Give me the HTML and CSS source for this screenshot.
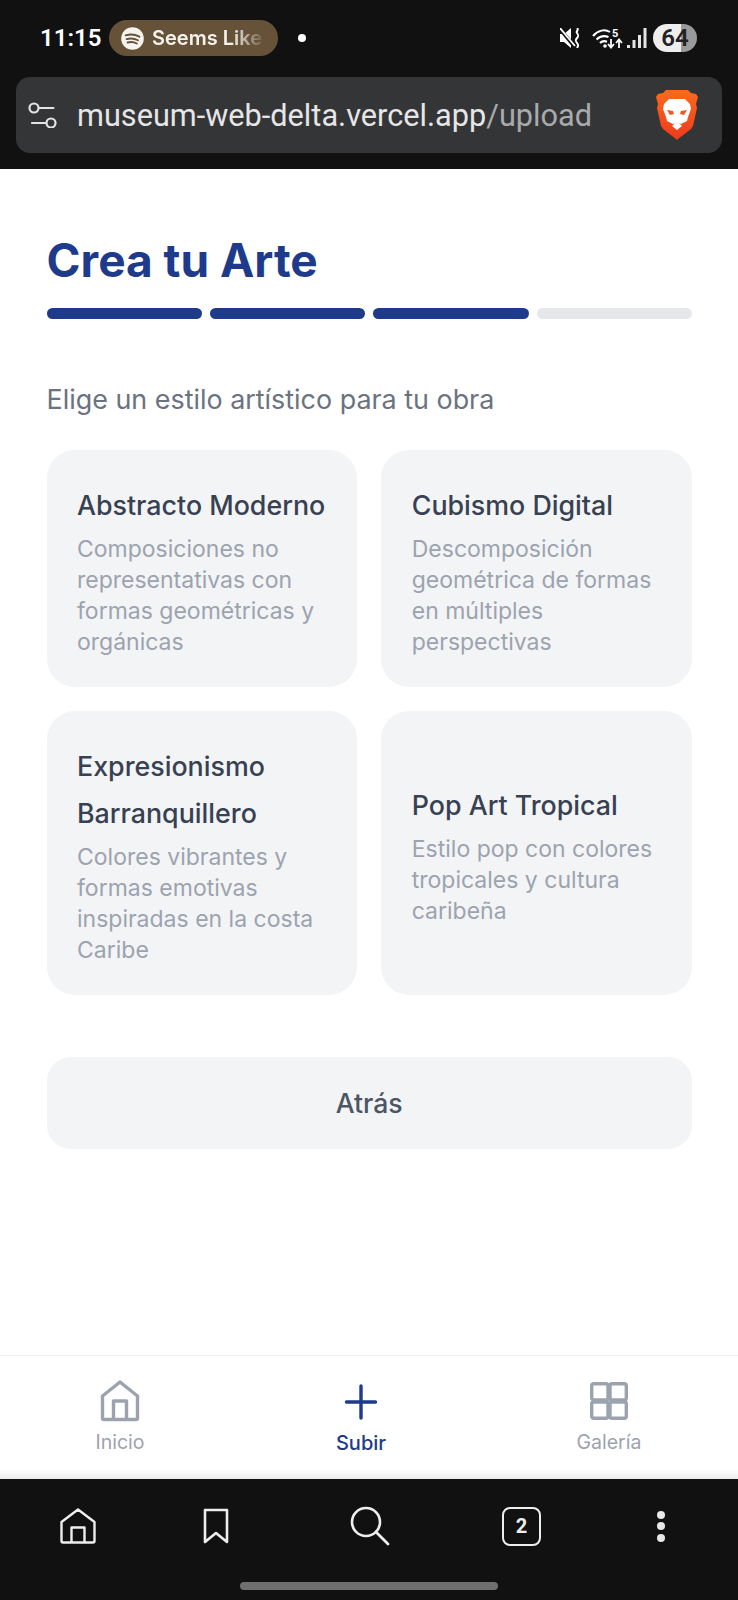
FILE: index.html
```html
<!DOCTYPE html>
<html lang="es">
<head>
<meta charset="utf-8">
<title>Crea tu Arte</title>
<link rel="stylesheet" href="styles.css">
</head>
<body>
<div class="phone">
  <header class="chrome-top">
    <div class="status">
      <span class="time">11:15</span>
      <span class="pill">
        <svg class="spotify" viewBox="0 0 24 24"><circle cx="12" cy="12" r="11.800" fill="#f6f3ee"/><path d="M4.800 8.700c4.600-1.400 10-1 14.400 1.400M5.800 12.600c3.800-1.100 8.200-.8 11.900 1.200M6.800 16.200c3.100-.8 6.700-.6 9.700 1" fill="none" stroke="#665238" stroke-width="2" stroke-linecap="round"/></svg>
        <span class="pill-text">Seems Like</span>
      </span>
      <span class="dot"></span>
      <span class="status-right">
        <svg class="ico-mute" viewBox="0 0 21 20"><path d="M0 6h4l7-6v20l-7-6H0z" fill="#fff"/><path d="M0 1l14 17" stroke="#111112" stroke-width="3.600"/><path d="M0 0l15 18" stroke="#fff" stroke-width="1.800"/><path d="M17 0c2.500 2-1.500 3 0 5s2 3 0 5-1.500 3 0 5 1.500 2.500 0 5" fill="none" stroke="#fff" stroke-width="2"/></svg>
        <svg class="ico-wifi" viewBox="0 0 31 22"><path d="M1 9c5-6 12-7 17-4M4.500 12.500c3.500-3.500 8-4 12-2.500M8 16c2-2 4.500-2.300 7-1.300" fill="none" stroke="#fff" stroke-width="2"/><circle cx="13" cy="19" r="1.800" fill="#fff"/><path d="M19 12v8M16 17l3 3.500 3-3.500M27 21v-8M24 16l3-3.500 3 3.500" fill="none" stroke="#fff" stroke-width="1.800"/><text x="20" y="9.500" class="wifi-5">5</text></svg>
        <svg class="ico-signal" viewBox="0 0 20 20"><path d="M0 17h3v3H0zM5.500 12h3v8h-3zM11 7h3v13h-3zM16.500 0h3v20h-3z" fill="#e4e4e4"/></svg>
        <span class="battery">64</span>
      </span>
    </div>
    <div class="urlbar">
      <svg class="ico-tune" viewBox="0 0 30 26"><circle cx="6" cy="6" r="4.500" fill="none" stroke="#e4e4e4" stroke-width="2.200"/><path d="M11.500 6h14M4 21h13.500" stroke="#e4e4e4" stroke-width="2.200" stroke-linecap="round"/><circle cx="23" cy="21" r="4.500" fill="none" stroke="#e4e4e4" stroke-width="2.200"/></svg>
      <span class="url"><span class="url-host">museum-web-delta.vercel.app</span><span class="url-path">/upload</span></span>
      <svg class="ico-brave" viewBox="0 0 42 50">
        <defs><linearGradient id="brave" x1="0" y1="0" x2="0" y2="1"><stop offset="0" stop-color="#fb6a1c"/><stop offset="1" stop-color="#ee3a1e"/></linearGradient></defs>
        <path d="M10 0h22l3 3 5 1 2 3-2 7 1 4-4 18-2 3-13 10-1 1-1-1-13-10-2-3-4-18 1-4-2-7 2-3 5-1z" fill="url(#brave)"/>
        <path d="M13 9h16l5 5 1 5-3 8-1 4-6 3-2-1 3 3-5 4-5-4 3-3-2 1-6-3-1-4-3-8 1-5z" fill="#fff"/>
        <path d="M11 20l6 1 1 3-4 1zM31 20l-6 1-1 3 4 1z" fill="#f4561e"/>
      </svg>
    </div>
  </header>

  <main class="page">
    <h1 class="title">Crea tu Arte</h1>
    <div class="steps">
      <span class="step on"></span><span class="step on"></span><span class="step on"></span><span class="step"></span>
    </div>
    <p class="lead">Elige un estilo artístico para tu obra</p>
    <div class="grid">
      <div class="card">
        <h2>Abstracto Moderno</h2>
        <p>Composiciones no representativas con formas geométricas y orgánicas</p>
      </div>
      <div class="card">
        <h2>Cubismo Digital</h2>
        <p>Descomposición geométrica de formas en múltiples perspectivas</p>
      </div>
      <div class="card">
        <h2>Expresionismo Barranquillero</h2>
        <p>Colores vibrantes y formas emotivas inspiradas en la costa Caribe</p>
      </div>
      <div class="card">
        <h2>Pop Art Tropical</h2>
        <p>Estilo pop con colores tropicales y cultura caribeña</p>
      </div>
    </div>
    <button class="back">Atrás</button>
  </main>

  <nav class="tabs">
    <div class="tab">
      <svg class="tab-ico" viewBox="0 0 40 42"><path d="M2.500 16L20 2l17.500 14v22a1.500 1.500 0 0 1-1.500 1.500H4A1.500 1.500 0 0 1 2.500 38z M13.500 39.500V21h13v18.500" fill="none" stroke="#9ca3af" stroke-width="3.400" stroke-linejoin="round"/></svg>
      <span>Inicio</span>
    </div>
    <div class="tab active">
      <svg class="tab-ico" viewBox="0 0 40 42"><path d="M20 6v32M5.500 22h29" stroke="#1e3a8a" stroke-width="3.400" stroke-linecap="round"/></svg>
      <span>Subir</span>
    </div>
    <div class="tab">
      <svg class="tab-ico" viewBox="0 0 40 42"><g fill="none" stroke="#9ca3af" stroke-width="3.400" stroke-linejoin="round"><rect x="2.700" y="3.700" width="16.300" height="16.300" rx="2"/><rect x="21" y="3.700" width="16.300" height="16.300" rx="2"/><rect x="2.700" y="22" width="16.300" height="16.300" rx="2"/><rect x="21" y="22" width="16.300" height="16.300" rx="2"/></g></svg>
      <span>Galería</span>
    </div>
  </nav>

  <footer class="chrome-bottom">
    <div class="actions">
      <svg class="act act-home" viewBox="0 0 36 36"><path d="M1.500 14L18 1.500 34.500 14v19a1.500 1.500 0 0 1-1.500 1.500H3A1.500 1.500 0 0 1 1.500 33z M11.500 34.500V19.500h13v15" fill="none" stroke="#eee" stroke-width="2.400" stroke-linejoin="round"/></svg>
      <svg class="act act-mark" viewBox="0 0 26 36"><path d="M2 2h22v32l-11-9-11 9z" fill="none" stroke="#eee" stroke-width="2.600" stroke-linejoin="round"/></svg>
      <svg class="act act-search" viewBox="0 0 40 40"><circle cx="16" cy="16" r="14" fill="none" stroke="#eee" stroke-width="2.600"/><path d="M26 26l12 12" stroke="#eee" stroke-width="2.800" stroke-linecap="round"/></svg>
      <span class="tabcount">2</span>
      <span class="more"><i></i><i></i><i></i></span>
    </div>
    <div class="homebar"></div>
  </footer>
</div>
</body>
</html>
```
FILE: styles.css
```css
* { box-sizing: border-box; }
html, body { margin: 0; padding: 0; }
body { font-family: Inter, "Liberation Sans", sans-serif; background: #fff; }
.phone { width: 738px; height: 1600px; display: flex; flex-direction: column; overflow: hidden; }

.chrome-top { height: 169px; background: #111112; padding: 20px 16px 0; flex: none; }
.status { height: 36px; display: flex; align-items: center; padding-left: 24px; padding-right: 25px; color: #fff; }
.time { font: 600 24px/36px Roboto, sans-serif; width: 60px; white-space: nowrap; }
.pill { margin-left: 9px; width: 169px; height: 36px; border-radius: 18px; background: #665238; display: flex; align-items: center; padding-left: 12px; gap: 8px; flex: none; }
.spotify { width: 23px; height: 23px; flex: none; }
.pill-text { font: 600 20px/1 Inter, sans-serif; white-space: nowrap; color: #f5f2ed; -webkit-mask-image: linear-gradient(90deg, #000 72%, rgba(0,0,0,.12) 100%); mask-image: linear-gradient(90deg, #000 72%, rgba(0,0,0,.12) 100%); }
.dot { width: 8px; height: 8px; border-radius: 50%; background: #fff; margin-left: 20px; }
.status-right { margin-left: auto; display: flex; align-items: center; }
.ico-mute { width: 21px; height: 20px; }
.ico-wifi { width: 31px; height: 22px; margin-left: 11px; }
.wifi-5 { font: 700 11px Roboto, sans-serif; fill: #fff; }
.ico-signal { width: 20px; height: 20px; margin-left: 4px; }
.battery { width: 44px; height: 28px; margin-left: 6px; border-radius: 14px; background: linear-gradient(90deg, #eeeeee 64%, #9a9a9a 64%); color: #222; font: 600 24px/28px Roboto, sans-serif; text-align: center; }

.urlbar { margin-top: 21px; height: 76px; width: 706px; border-radius: 14px; background: #343537; display: flex; align-items: center; padding: 0 24px 0 12px; }
.ico-tune { width: 30px; height: 26px; flex: none; }
.url { margin-left: 19px; padding-top: 3px; font: 400 30.700px/1 Roboto, sans-serif; white-space: nowrap; }
.url-host { color: #e6e6e6; }
.url-path { color: #a9aaac; }
.ico-brave { margin-left: auto; width: 42px; height: 50px; flex: none; }

.page { flex: 1; padding: 65px 46px 0 46.500px; }
.title { margin: 0; font: 700 46px/53px Inter, sans-serif; color: #1e3a8a; }
.steps { display: flex; gap: 8px; margin-top: 21px; }
.step { flex: 1; height: 11px; border-radius: 6px; background: #e5e7eb; }
.step.on { background: #1e3a8a; }
.lead { margin: 65px 0 0; font: 400 26.900px/30px Inter, sans-serif; color: #6b7280; }
.grid { margin-top: 36px; display: grid; grid-template-columns: 1fr 1fr; gap: 24px; }
.card { background: #f3f4f6; border-radius: 28px; padding: 30px 30.500px 29px; display: flex; flex-direction: column; justify-content: center; }
.card h2 { margin: 0 0 5px; padding-top: 2px; font: 500 26.800px/47px Inter, sans-serif; color: #374151; }
.card p { margin: 0; font: 400 23px/31px Inter, sans-serif; color: #9ca3af; }
.back { display: block; width: 100%; height: 92px; margin-top: 62px; border: 0; border-radius: 24px; background: #f3f4f6; color: #4b5563; font: 500 26.600px/1 Inter, sans-serif; }

.tabs { flex: none; height: 124px; border-top: 1px solid #eeeff1; display: grid; grid-template-columns: 240px 242px 254px; background: linear-gradient(#fff 92%, #ececec 100%); padding-top: 24px; }
.tab { display: flex; flex-direction: column; align-items: center; color: #9ca3af; font: 400 19.500px/23px Inter, sans-serif; }
.tab.active { color: #1e3a8a; font-weight: 500; font-size: 20px; }
.tab-ico { width: 40px; height: 42px; margin-bottom: 9px; }
.tab.active .tab-ico { margin-bottom: 10px; }

.chrome-bottom { flex: none; height: 121px; background: #111112; padding-top: 24px; }
.actions { height: 46px; display: flex; align-items: center; padding-left: 60px; }
.act { flex: none; }
.act-home { width: 36px; height: 36px; }
.act-mark { width: 26px; height: 36px; margin-left: 107px; }
.act-search { width: 40px; height: 40px; margin-left: 121px; }
.tabcount { margin-left: 112px; width: 39px; height: 39px; border: 2.500px solid #eee; border-radius: 8px; color: #eee; font: 700 20px/34px Roboto, sans-serif; text-align: center; flex: none; }
.more { margin-left: 116px; display: flex; flex-direction: column; gap: 3.500px; }
.more i { width: 8px; height: 8px; border-radius: 50%; background: #e8e8e8; display: block; }
.homebar { width: 258px; height: 8px; margin: 33px auto 0; border-radius: 4px; background: #6f6f6f; }
```
